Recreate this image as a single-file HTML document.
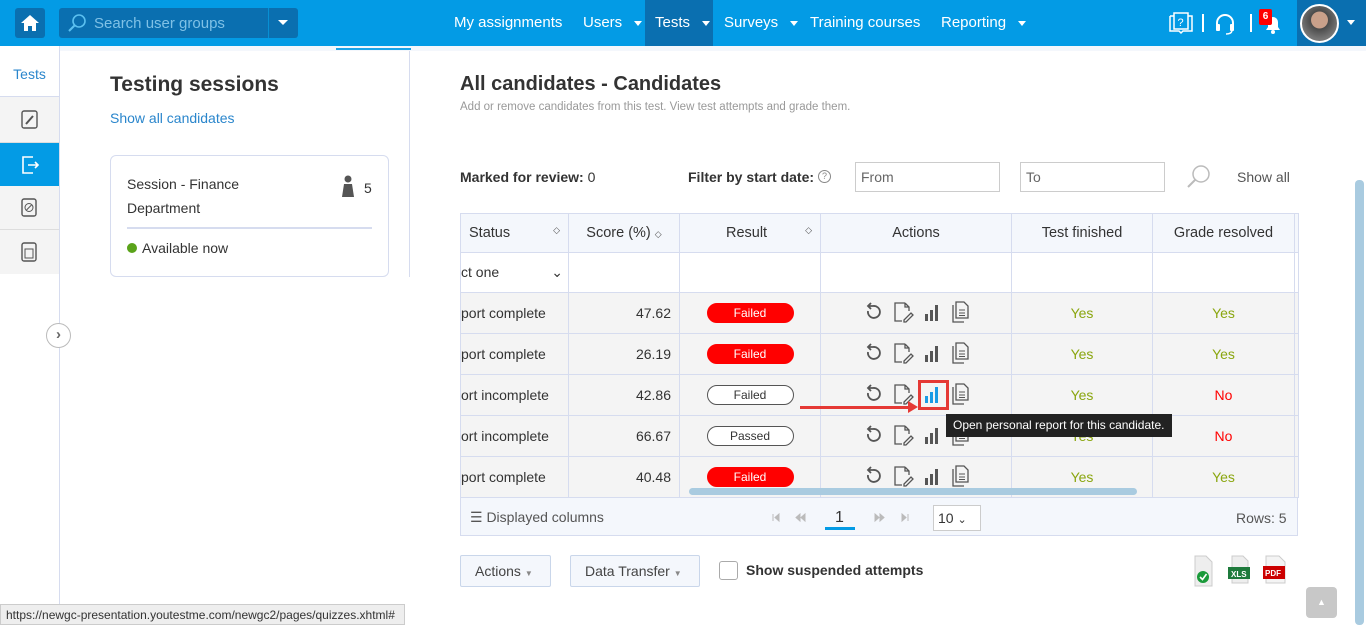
<!DOCTYPE html>
<html><head><meta charset="utf-8"><style>
*{box-sizing:border-box;margin:0;padding:0}
body{width:1366px;height:625px;overflow:hidden;background:#fff;font-family:"Liberation Sans",sans-serif;position:relative;color:#333}
.a{position:absolute}
.nav{left:0;top:0;width:1366px;height:46px;background:#039be5}
.nl{color:#fff;font-size:15px;top:14px}
.car{display:inline-block;border-left:4px solid transparent;border-right:4px solid transparent;border-top:5px solid #fff;vertical-align:middle;margin-left:8px}
table{border-collapse:collapse;position:absolute;left:460px;top:213px;font-size:14px;table-layout:fixed}
td{border:1px solid #d6dcef;height:41px;padding:0 8px;background:#f4f4f4;color:#333;overflow:hidden;white-space:nowrap}
tr.h td{background:#f4f7fc;height:39px;text-align:center;font-size:14.5px}
tr.f td{background:#fff;height:40px}
.pill{display:inline-block;width:87px;height:20px;border-radius:10px;font-size:12px;line-height:18px;text-align:center}
.red{background:#f00;color:#fff;border:1px solid #f00}
.wh{background:#fff;border:1px solid #555;color:#333}
.y{color:#8aa60f;text-align:center}.n{color:#f00;text-align:center}
.r{text-align:right}
.ic{display:inline-flex;gap:9px;align-items:center;justify-content:center;width:100%}
.inp{border:1px solid #ccc;height:30px;width:145px;font-size:14px;color:#666;padding:6px 5px}
.btn{border:1px solid #c9d6ea;background:#f4f7fc;height:32px;font-size:14px;color:#444;padding:7px 14px;border-radius:2px}
.so{font-size:9px;color:#555}
</style></head><body>
<div class="a nav"></div>
<div class="a" style="left:15px;top:8px;width:30px;height:30px;background:#0a6fb0;border-radius:3px"><svg width="30" height="30"><path d="M15 7 L6 15 H9 V23 H13 V18 H17 V23 H21 V15 H24Z" fill="#fff"/></svg></div>
<div class="a" style="left:59px;top:8px;width:239px;height:30px;background:#0a6fb0;border-radius:3px"></div>
<div class="a" style="left:268px;top:8px;width:1px;height:30px;background:#0890d4"></div>
<svg class="a" style="left:66px;top:12px" width="22" height="22"><circle cx="13" cy="9" r="6" fill="none" stroke="#5bc0f0" stroke-width="1.6"/><path d="M9 13 L3 19" stroke="#5bc0f0" stroke-width="2"/></svg>
<div class="a" style="left:94px;top:15px;color:#7fc1e6;font-size:15px">Search user groups</div>
<div class="a" style="left:278px;top:20px;border-left:5px solid transparent;border-right:5px solid transparent;border-top:5px solid #fff"></div>
<div class="a" style="left:645px;top:0;width:68px;height:46px;background:#0a6fb0"></div>
<div class="a nl" style="left:454px">My assignments</div>
<div class="a nl" style="left:583px">Users<span class="car" style="margin-left:12px"></span></div>
<div class="a nl" style="left:655px">Tests<span class="car" style="margin-left:12px"></span></div>
<div class="a nl" style="left:724px">Surveys<span class="car" style="margin-left:12px"></span></div>
<div class="a nl" style="left:810px">Training courses</div>
<div class="a nl" style="left:941px">Reporting<span class="car" style="margin-left:12px"></span></div>
<svg class="a" style="left:1168px;top:11px" width="26" height="24"><path d="M2 5 V20 H11 L13 22 L15 20 H24 V5 H20 M2 5 H6 M6 2 H20 V18 H6Z" fill="none" stroke="#fff" stroke-width="1.5"/><text x="9.5" y="15" fill="#fff" font-size="11" font-family="Liberation Sans">?</text></svg>
<div class="a" style="left:1202px;top:14px;width:2px;height:18px;background:#fff"></div>
<svg class="a" style="left:1213px;top:12px" width="24" height="24"><path d="M4 14 V11 A8 8 0 0 1 20 11 V14" fill="none" stroke="#fff" stroke-width="2"/><rect x="3" y="12" width="4" height="7" rx="1" fill="#fff"/><rect x="17" y="12" width="4" height="7" rx="1" fill="#fff"/><path d="M19 19 Q18 22 13 22" stroke="#fff" fill="none" stroke-width="1.5"/></svg>
<div class="a" style="left:1250px;top:14px;width:2px;height:18px;background:#fff"></div>
<svg class="a" style="left:1262px;top:12px" width="22" height="24"><path d="M4 18 H18 L16 15 V10 A5 5 0 0 0 6 10 V15Z" fill="#fff"/><circle cx="11" cy="20" r="2" fill="#fff"/></svg>
<div class="a" style="left:1259px;top:9px;width:13px;height:16px;background:#f00;color:#fff;font-size:10px;font-weight:bold;text-align:center;line-height:16px;border-radius:2px">6</div>
<div class="a" style="left:1297px;top:0;width:69px;height:46px;background:#0a6fb0"></div>
<div class="a" style="left:1300px;top:4px;width:39px;height:39px;border-radius:50%;background:radial-gradient(circle at 50% 40%,#c9a08a 0 30%,#4a4a4a 32%,#777 70%);border:2px solid #fff"></div>
<div class="a" style="left:1347px;top:20px;border-left:4px solid transparent;border-right:4px solid transparent;border-top:5px solid #fff"></div>

<div class="a" style="left:0;top:46px;width:1366px;height:5px;background:#f4f7fc"></div>
<div class="a" style="left:336px;top:48px;width:75px;height:2px;background:#1aa3e8"></div>
<div class="a" style="left:59px;top:46px;width:1px;height:579px;background:#d6dcef"></div>
<div class="a" style="left:0;top:46px;width:59px;height:51px;background:#fff;border-bottom:1px solid #d6dcef;color:#2a86cc;font-size:14px;text-align:center;padding-top:20px">Tests</div>
<div class="a" style="left:0;top:97px;width:59px;height:46px;background:#f4f4f4;border-bottom:1px solid #ddd"><svg width="59" height="46"><rect x="22" y="14" width="15" height="17" rx="2" fill="none" stroke="#555" stroke-width="1.4"/><path d="M26 27 L33 19" stroke="#555" stroke-width="2"/></svg></div>
<div class="a" style="left:0;top:143px;width:59px;height:43px;background:#039be5"><svg width="59" height="43"><path d="M33 14 H23 V30 H33 M28 22 H38 M35 19 L38 22 L35 25" fill="none" stroke="#fff" stroke-width="1.6"/></svg></div>
<div class="a" style="left:0;top:186px;width:59px;height:44px;background:#f4f4f4;border-bottom:1px solid #ddd"><svg width="59" height="44"><rect x="22" y="13" width="14" height="17" rx="2" fill="none" stroke="#555" stroke-width="1.4"/><circle cx="29" cy="21.5" r="4" fill="none" stroke="#555"/><path d="M26.5 24 L31.5 19" stroke="#555"/></svg></div>
<div class="a" style="left:0;top:230px;width:59px;height:44px;background:#f4f4f4"><svg width="59" height="44"><rect x="22" y="13" width="14" height="18" rx="2" fill="none" stroke="#555" stroke-width="1.4"/><rect x="25" y="19" width="8" height="9" fill="none" stroke="#555"/></svg></div>
<div class="a" style="left:46px;top:323px;width:25px;height:25px;border-radius:50%;background:#fff;border:1px solid #bbb;color:#666;font-size:15px;text-align:center;line-height:22px;font-weight:bold">›</div>
<div class="a" style="left:409px;top:51px;width:1px;height:226px;background:#d6dcef"></div>
<div class="a" style="left:110px;top:73px;font-size:21px;font-weight:bold;color:#333">Testing sessions</div>
<div class="a" style="left:110px;top:110px;font-size:14px;color:#2a86cc">Show all candidates</div>
<div class="a" style="left:110px;top:155px;width:279px;height:122px;border:1px solid #d6dcef;border-radius:6px"></div>
<div class="a" style="left:127px;top:172px;font-size:14px;line-height:24px">Session - Finance<br>Department</div>
<svg class="a" style="left:341px;top:175px" width="14" height="22"><circle cx="7" cy="4" r="3.5" fill="#555"/><path d="M3 9 H11 L13 22 H1Z" fill="#555"/></svg>
<div class="a" style="left:364px;top:180px;font-size:14px">5</div>
<div class="a" style="left:127px;top:227px;width:245px;height:2px;background:#d6dcef"></div>
<div class="a" style="left:127px;top:243px;width:10px;height:10px;border-radius:50%;background:#5aa31a"></div>
<div class="a" style="left:142px;top:240px;font-size:14px">Available now</div>
<div class="a" style="left:460px;top:73px;font-size:20px;font-weight:bold;color:#333">All candidates - Candidates</div>
<div class="a" style="left:460px;top:101px;font-size:11.5px;color:#999">Add or remove candidates from this test. View test attempts and grade them.</div>
<div class="a" style="left:460px;top:169px;font-size:14px"><b>Marked for review:</b> 0</div>
<div class="a" style="left:688px;top:169px;font-size:14px;font-weight:bold">Filter by start date:</div>
<div class="a" style="left:818px;top:170px;width:13px;height:13px;border:1px solid #888;border-radius:50%;font-size:9px;text-align:center;line-height:11px;color:#888">?</div>
<div class="a inp" style="left:855px;top:162px">From</div>
<div class="a inp" style="left:1020px;top:162px">To</div>
<svg class="a" style="left:1186px;top:164px" width="26" height="26"><circle cx="15" cy="10" r="8" fill="none" stroke="#bbb" stroke-width="1.5"/><path d="M9 16 L2 23" stroke="#bbb" stroke-width="2"/></svg>
<div class="a" style="left:1237px;top:169px;font-size:14px;color:#555">Show all</div>

<table>
<colgroup><col style="width:108px"><col style="width:111px"><col style="width:141px"><col style="width:191px"><col style="width:141px"><col style="width:142px"><col style="width:4px"></colgroup>
<tr class="h"><td style="text-align:left">Status<span class="so" style="float:right">◇</span></td><td>Score (%) <span class="so">◇</span></td><td>Result<span class="so" style="float:right">◇</span></td><td>Actions</td><td>Test finished</td><td>Grade resolved</td><td style="padding:0"></td></tr>
<tr class="f"><td style="padding:0">ct one<span style="float:right;margin-right:5px">⌄</span></td><td></td><td></td><td></td><td></td><td></td><td style="padding:0"></td></tr>
<tr><td style="padding:0">port complete</td><td class="r">47.62</td><td style="text-align:center"><span class="pill red">Failed</span></td><td><div class="ic">ICONS</div></td><td class="y">Yes</td><td class="y">Yes</td><td style="padding:0"></td></tr>
<tr><td style="padding:0">port complete</td><td class="r">26.19</td><td style="text-align:center"><span class="pill red">Failed</span></td><td><div class="ic">ICONS</div></td><td class="y">Yes</td><td class="y">Yes</td><td style="padding:0"></td></tr>
<tr><td style="padding:0">ort incomplete</td><td class="r">42.86</td><td style="text-align:center"><span class="pill wh">Failed</span></td><td><div class="ic">ICONSB</div></td><td class="y">Yes</td><td class="n">No</td><td style="padding:0"></td></tr>
<tr><td style="padding:0">ort incomplete</td><td class="r">66.67</td><td style="text-align:center"><span class="pill wh">Passed</span></td><td><div class="ic">ICONS</div></td><td class="y">Yes</td><td class="n">No</td><td style="padding:0"></td></tr>
<tr><td style="padding:0">port complete</td><td class="r">40.48</td><td style="text-align:center"><span class="pill red">Failed</span></td><td><div class="ic">ICONS</div></td><td class="y">Yes</td><td class="y">Yes</td><td style="padding:0"></td></tr>
</table>
<div class="a" style="left:460px;top:497px;width:838px;height:39px;background:#f4f7fc;border:1px solid #d6dcef"></div>
<div class="a" style="left:689px;top:488px;width:448px;height:7px;border-radius:4px;background:#a9cbe0"></div>
<div class="a" style="left:470px;top:509px;font-size:14px;color:#555">☰ Displayed columns</div>
<svg class="a" style="left:772px;top:513px" width="40" height="10"><path d="M1 1 V8 M7 1 L3 4.5 L7 8Z M28 1 L24 4.5 L28 8Z M33 1 L29 4.5 L33 8Z" fill="#bbb" stroke="#bbb"/></svg>
<div class="a" style="left:835px;top:509px;font-size:16px;color:#333">1</div>
<div class="a" style="left:825px;top:527px;width:30px;height:3px;background:#039be5"></div>
<svg class="a" style="left:874px;top:513px" width="40" height="10"><path d="M1 1 L5 4.5 L1 8Z M6 1 L10 4.5 L6 8Z M28 1 L32 4.5 L28 8Z M34 1 V8" fill="#bbb" stroke="#bbb"/></svg>
<div class="a" style="left:933px;top:505px;width:48px;height:26px;border:1px solid #ccc;background:#fff;font-size:14px;padding:4px 4px">10 <span style="font-size:11px">⌄</span></div>
<div class="a" style="left:1236px;top:510px;font-size:14px;color:#555">Rows: 5</div>

<div class="a btn" style="left:460px;top:555px;width:91px">Actions <span style="font-size:8px;color:#888">▼</span></div>
<div class="a btn" style="left:570px;top:555px;width:130px">Data Transfer <span style="font-size:8px;color:#888">▼</span></div>
<div class="a" style="left:719px;top:561px;width:19px;height:19px;border:1px solid #aaa;border-radius:3px;background:#fff"></div>
<div class="a" style="left:746px;top:562px;font-size:14px;font-weight:bold">Show suspended attempts</div>
<svg class="a" style="left:1192px;top:555px" width="100" height="32"><path d="M3 1 H14 L20 7 V31 H3Z" fill="#eee" stroke="#ccc"/><circle cx="11" cy="22" r="6" fill="#1a9a3a"/><path d="M8 22 L10.5 24.5 L14.5 19" stroke="#fff" stroke-width="1.6" fill="none"/><path d="M40 1 H51 L56 6 V28 H40Z" fill="#eee" stroke="#ccc"/><rect x="36" y="12" width="22" height="12" fill="#1e7a3c"/><text x="39" y="22" fill="#fff" font-size="8" font-family="Liberation Sans" font-weight="bold">XLS</text><path d="M74 1 H87 L93 7 V28 H74Z" fill="#f4f4f4" stroke="#ccc"/><rect x="71" y="11" width="22" height="13" fill="#c00"/><text x="73" y="21" fill="#fff" font-size="8" font-family="Liberation Sans" font-weight="bold">PDF</text></svg>

<div class="a" style="left:1306px;top:587px;width:31px;height:31px;border-radius:4px;background:#c8c8c8;color:#fff;font-size:9px;text-align:center;line-height:31px">▲</div>
<div class="a" style="left:1355px;top:180px;width:9px;height:445px;border-radius:4px;background:#a9cbe0"></div>

<div class="a" style="left:918px;top:380px;width:31px;height:30px;border:3px solid #e53935"></div>
<div class="a" style="left:800px;top:406px;width:110px;height:3px;background:#e53935"></div>
<div class="a" style="left:908px;top:401px;border-top:6px solid transparent;border-bottom:6px solid transparent;border-left:10px solid #e53935"></div>
<div class="a" style="left:946px;top:414px;width:226px;height:23px;background:#222;color:#fff;font-size:12px;padding:4px 7px;white-space:nowrap">Open personal report for this candidate.</div>

<div class="a" style="left:0;top:604px;width:405px;height:21px;background:#eee;border:1px solid #ccc;font-size:12px;color:#333;padding:3px 5px">https://newgc-presentation.youtestme.com/newgc2/pages/quizzes.xhtml#</div>
<script>
var g='<svg width="20" height="20"><path d="M5 9 A6 6 0 1 0 10 4 H6 M8 1 L5 4 L8 7" fill="none" stroke="#555" stroke-width="1.8"/></svg><svg width="22" height="22"><path d="M13 2 H3 V20 H10 M13 2 L17 6 V10 M13 2 V6 H17 M12 19 L19 12 L21 14 L14 21 H12Z" fill="none" stroke="#555" stroke-width="1.3"/></svg>';
var b1='<svg width="18" height="20"><rect x="2" y="12" width="3" height="7" fill="#555"/><rect x="7" y="8" width="3" height="11" fill="#555"/><rect x="12" y="3" width="3" height="16" fill="#555"/></svg>';
var b2='<svg width="18" height="20"><rect x="2" y="12" width="3" height="7" fill="#1a9be5"/><rect x="7" y="8" width="3" height="11" fill="#1a9be5"/><rect x="12" y="3" width="3" height="16" fill="#1a9be5"/></svg>';
var d='<svg width="20" height="22"><path d="M6 1 H14 L18 5 V17 H6Z M3 4 V21 H14" fill="none" stroke="#555" stroke-width="1.3"/><path d="M9 9 H15 M9 12 H15 M9 14.5 H15" stroke="#555"/></svg>';
document.querySelectorAll('.ic').forEach(function(e){e.innerHTML=g+(e.textContent=='ICONSB'?b2:b1)+d;});
</script>
</body></html>
